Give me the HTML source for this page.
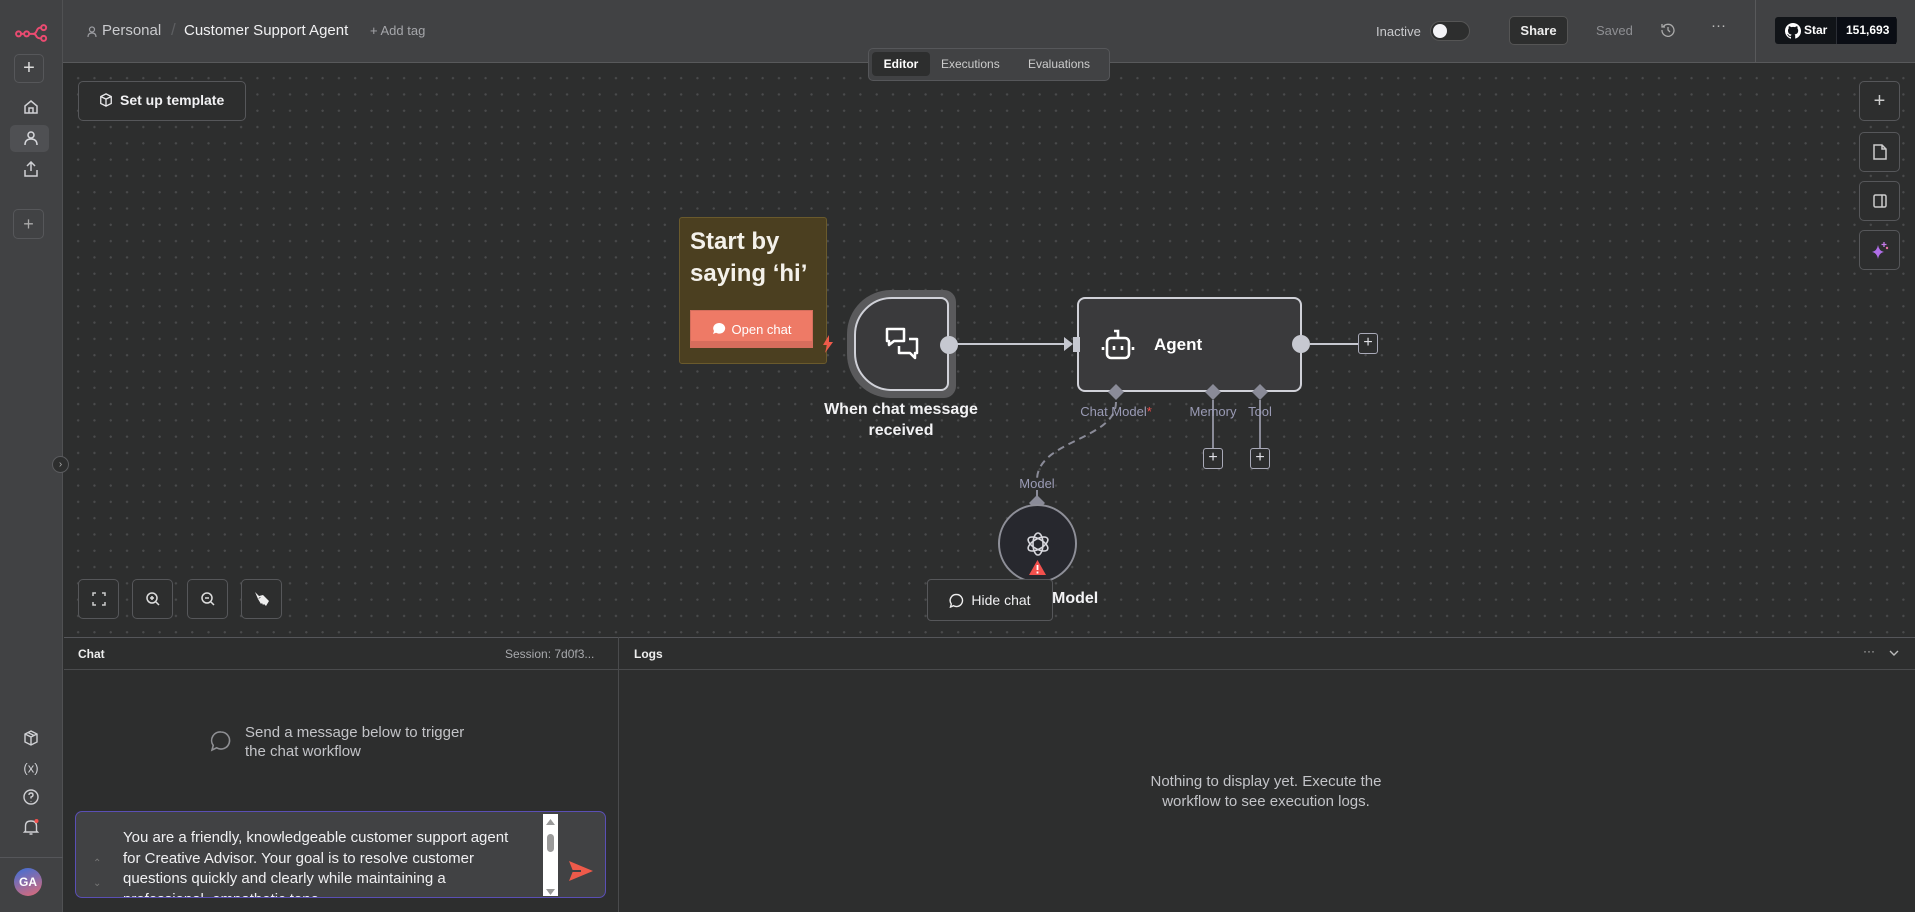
<!DOCTYPE html>
<html><head><meta charset="utf-8"><style>
*{box-sizing:border-box;margin:0;padding:0}
body{width:1915px;height:912px;overflow:hidden;background:#2d2e2e;font-family:"Liberation Sans",sans-serif;color:#e8e8ea;position:relative}
.abs{position:absolute}
#side{left:0;top:0;width:63px;height:912px;background:#414244;border-right:1px solid #505153}
#head{left:63px;top:0;width:1852px;height:63px;background:#414244;border-bottom:1px solid #58595b}
#canvas{left:64px;top:64px;width:1851px;height:573px;background-color:#2d2e2e;background-image:radial-gradient(#4a4b4c 1px,transparent 1.3px);background-size:16.3px 16.3px;background-position:6px 6px}
.btn{position:absolute;border:1px solid #56575a;border-radius:5px;background:#2d2e2e}
.ctr{display:flex;align-items:center;justify-content:center}
.lbl{position:absolute;font-size:13px;color:#9a9bb5;transform:translateX(-50%);white-space:nowrap}
.plus{position:absolute;width:20px;height:21px;border:1.5px solid #a9aab8;border-radius:3px;color:#e0e0e6;font-size:16px;line-height:17px;text-align:center;background:#2d2e2e}
.sico{position:absolute;left:31px;transform:translate(-50%,-50%);color:#cfd0d4}
</style></head><body>
<div id="side" class="abs">
 <svg class="abs" style="left:15px;top:24px" width="34" height="18" viewBox="0 0 38 20" fill="none" stroke="#ea4b71" stroke-width="2.2"><circle cx="4" cy="11" r="2.8"/><circle cx="13" cy="11" r="2.8"/><circle cx="32" cy="4" r="2.8"/><circle cx="32" cy="16" r="2.8"/><path d="M7 11h3M16 11h4q3 0 4-3l1-2q1-2 4-2M20 11q3 0 4 3l1 1q1 1 4 1"/></svg>
 <div class="btn ctr" style="left:14px;top:54px;width:30px;height:29px;background:#414244;color:#ddd;font-size:20px">+</div>
 <svg class="sico" style="top:107px" width="16" height="16" viewBox="0 0 16 16" fill="none" stroke="#cfd0d4" stroke-width="1.5"><path d="M2 7l6-5 6 5v7H2z M6 14V9h4v5"/></svg>
 <div class="abs" style="left:10px;top:125px;width:39px;height:27px;background:#4f5053;border-radius:5px"></div>
 <svg class="sico" style="top:138px" width="16" height="16" viewBox="0 0 16 16" fill="none" stroke="#d7d8dc" stroke-width="1.5"><circle cx="8" cy="5" r="3"/><path d="M2 15q0-6 6-6t6 6"/></svg>
 <svg class="sico" style="top:169px" width="16" height="16" viewBox="0 0 16 16" fill="none" stroke="#cfd0d4" stroke-width="1.5"><path d="M8 10V1M4 5l4-4 4 4M2 9v6h12V9"/></svg>
 <div class="btn ctr" style="left:13px;top:209px;width:31px;height:30px;background:#414244;color:#aaa;font-size:18px">+</div>
 <svg class="sico" style="top:738px" width="16" height="16" viewBox="0 0 16 16" fill="none" stroke="#cfd0d4" stroke-width="1.4"><path d="M8 1l6 3v8l-6 3-6-3V4z M2 4l6 3 6-3M8 7v8M5 2.5l6 3"/></svg>
 <div class="sico" style="top:768px;font-size:13px">(x)</div>
 <svg class="sico" style="top:797px" width="17" height="17" viewBox="0 0 17 17" fill="none" stroke="#cfd0d4" stroke-width="1.4"><circle cx="8.5" cy="8.5" r="7"/><path d="M6.5 6.5q0-2 2-2t2 2q0 1.5-2 2v1.5M8.5 12.5v.5"/></svg>
 <svg class="sico" style="top:827px" width="17" height="18" viewBox="0 0 17 18" fill="none" stroke="#cfd0d4" stroke-width="1.4"><path d="M3 13V8q0-5 5.5-5T14 8v5l1 1H2z M7 16h3"/><circle cx="14" cy="3" r="2" fill="#f2504d" stroke="none"/></svg>
 <div class="abs" style="left:0;top:857px;width:63px;border-top:1px solid #55565a"></div>
 <div class="abs ctr" style="left:14px;top:868px;width:28px;height:28px;border-radius:50%;background:linear-gradient(160deg,#3c6fd8,#e06a76);font-size:12px;font-weight:bold;color:#fff">GA</div>
</div>
<div id="head" class="abs">
 <svg class="abs" style="left:24px;top:26px" width="10" height="12" viewBox="0 0 10 12" fill="none" stroke="#9c9da2" stroke-width="1.2"><circle cx="5" cy="3.5" r="2.5"/><path d="M1 11q0-4 4-4t4 4"/></svg>
 <div class="abs" style="left:39px;top:22px;font-size:15px;color:#c9cacd">Personal</div>
 <div class="abs" style="left:108px;top:20px;font-size:17px;color:#5d5e61">/</div>
 <div class="abs" style="left:121px;top:22px;font-size:15px;color:#f1f1f3">Customer Support Agent</div>
 <div class="abs" style="left:307px;top:23px;font-size:13px;color:#a5a6aa">+ Add tag</div>
 <div class="abs" style="left:1313px;top:24px;font-size:13px;color:#c9cacd">Inactive</div>
 <div class="abs" style="left:1367px;top:21px;width:40px;height:20px;border-radius:10px;background:#2d2e2e;border:1px solid #555"></div>
 <div class="abs" style="left:1370px;top:24px;width:14px;height:14px;border-radius:50%;background:#f3f3f6"></div>
 <div class="abs ctr" style="left:1446px;top:16px;width:59px;height:29px;border-radius:5px;background:#2d2e2e;border:1px solid #555;font-size:13px;font-weight:bold;color:#eee">Share</div>
 <div class="abs" style="left:1533px;top:23px;font-size:13px;color:#8e8f93">Saved</div>
 <svg class="abs" style="left:1598px;top:23px" width="14" height="14" viewBox="0 0 14 14" fill="none" stroke="#aaa" stroke-width="1.3"><path d="M2 4a6 6 0 1 1-1 3M1 1v3h3M7 4v3l2 2"/></svg>
 <div class="abs" style="left:1648px;top:17px;font-size:15px;color:#bbb">···</div>
 <div class="abs" style="left:1692px;top:0;height:63px;border-left:1px solid #58595b"></div>
 <div class="abs" style="left:1712px;top:17px;width:122px;height:27px;border-radius:3px;background:#111418"></div>
 <div class="abs" style="left:1773px;top:17px;width:60px;height:27px;background:#0a0d14;border-left:1px solid #2b2e35"></div>
 <svg class="abs" style="left:1722px;top:23px" width="16" height="16" viewBox="0 0 16 16"><path fill="#fff" d="M8 0a8 8 0 0 0-2.5 15.6c.4 0 .5-.2.5-.4v-1.4c-2.2.5-2.7-1-2.7-1-.4-.9-.9-1.2-.9-1.2-.7-.5.1-.5.1-.5.8.1 1.2.8 1.2.8.7 1.3 1.900.9 2.4.7 0-.5.3-.9.5-1.1-1.8-.2-3.6-.9-3.6-4 0-.9.3-1.6.8-2.1-.1-.2-.4-1 .1-2.1 0 0 .7-.2 2.2.8a7.5 7.5 0 0 1 4 0c1.5-1 2.2-.8 2.2-.8.4 1.1.2 1.9.1 2.1.5.6.8 1.3.8 2.1 0 3.1-1.9 3.7-3.6 3.9.3.3.6.8.6 1.5v2.2c0 .2.1.5.6.4A8 8 0 0 0 8 0z"/></svg>
 <div class="abs" style="left:1741px;top:23px;font-size:12px;font-weight:bold;color:#fff">Star</div>
 <div class="abs" style="left:1783px;top:23px;font-size:12px;font-weight:bold;color:#fff">151,693</div>
</div>
<div id="canvas" class="abs"></div>
<div class="abs" style="left:868px;top:48px;width:242px;height:33px;background:#414244;border-radius:5px;border:1px solid #56575a"></div>
<div class="abs ctr" style="left:872px;top:52px;width:58px;height:24px;background:#2d2e2e;border-radius:4px;font-size:12px;font-weight:bold;color:#fff">Editor</div>
<div class="abs" style="left:941px;top:57px;font-size:12px;color:#ccc">Executions</div>
<div class="abs" style="left:1028px;top:57px;font-size:12px;color:#ccc">Evaluations</div>
<div class="btn" style="left:78px;top:81px;width:168px;height:40px"></div>
<svg class="abs" style="left:99px;top:93px" width="14" height="14" viewBox="0 0 16 16" fill="none" stroke="#e8e8ea" stroke-width="1.5"><path d="M8 1l6 3v8l-6 3-6-3V4z M2 4l6 3 6-3M8 7v8"/></svg>
<div class="abs" style="left:120px;top:92px;font-size:14px;font-weight:bold;color:#f1f1f3">Set up template</div>
<div class="btn ctr" style="left:1859px;top:81px;width:41px;height:40px;color:#ccc;font-size:20px">+</div>
<div class="btn ctr" style="left:1859px;top:132px;width:41px;height:40px"><svg width="14" height="16" viewBox="0 0 14 16" fill="none" stroke="#ccc" stroke-width="1.5"><path d="M1 1h8l4 4v10H1z M9 1v4h4"/></svg></div>
<div class="btn ctr" style="left:1859px;top:181px;width:41px;height:40px"><svg width="14" height="14" viewBox="0 0 14 14" fill="none" stroke="#ccc" stroke-width="1.5"><rect x="1" y="1" width="12" height="12" rx="1.5"/><path d="M9 1v12"/></svg></div>
<div class="btn ctr" style="left:1859px;top:230px;width:41px;height:40px"><svg width="20" height="20" viewBox="0 0 20 20"><path fill="#b06ee8" d="M8 5q1 6 6 7-5 1-6 7-1-6-6-7 5-1 6-7z"/><path stroke="#c47ae8" stroke-width="1.3" d="M14 2v5M11.5 4.5h5"/><circle cx="17" cy="8" r="1.2" fill="#e86ea8"/></svg></div>
<div class="abs" style="left:679px;top:217px;width:148px;height:147px;background:#4b3f20;border:1px solid #6a5a2c;border-radius:3px"></div>
<div class="abs" style="left:690px;top:226px;font-size:24px;font-weight:bold;line-height:32px;color:#f4f1ea">Start by<br>saying ‘hi’</div>
<div class="abs ctr" style="left:690px;top:310px;width:123px;height:38px;background:#ee7a66;border:1px solid #d46e5d;font-size:13px;color:#fff;box-shadow:inset 0 -6px 0 #d76d5c"><svg width="14" height="14" viewBox="0 0 14 14" style="margin-right:6px"><path fill="#fff" d="M7 1a6 5.3 0 1 1-3 9.8L1 12l1-3A6 5.3 0 0 1 7 1z"/></svg>Open chat</div>
<svg class="abs" style="left:822px;top:335px" width="12" height="18" viewBox="0 0 12 18"><path fill="#ee5a4a" d="M7 0L1 10h4l-2 8 8-11H7z"/></svg>
<svg class="abs" style="left:0;top:0" width="1915" height="912" fill="none">
 <path d="M957 344H1070" stroke="#c6c8d0" stroke-width="2"/>
 <path d="M1064 337l9 7-9 7z" fill="#c6c8d0"/>
 <path d="M1310 344H1358" stroke="#c6c8d0" stroke-width="2"/>
 <path d="M1213 400V448M1260 400V448" stroke="#8a8b98" stroke-width="2"/>
 <path d="M1116 402C1116 440 1037 440 1037 480" stroke="#8a8b98" stroke-width="2" stroke-dasharray="7 5"/>
 <path d="M1037 490V500" stroke="#8a8b98" stroke-width="2"/>
</svg>
<div class="abs" style="left:847px;top:290px;width:109px;height:108px;background:#5a5a5c;border-radius:44px 12px 12px 44px"></div>
<div class="abs ctr" style="left:854px;top:297px;width:95px;height:94px;background:#3a3a3c;border:2px solid #d0d1d8;border-radius:38px 8px 8px 38px"><svg width="36" height="36" viewBox="0 0 36 36" fill="none" stroke="#fff" stroke-width="2.5" stroke-linejoin="round"><path d="M3 3h17v12H10l-5 4v-4H3z M25 13h8v14h-2v5l-5-5H15v-7"/></svg></div>
<div class="abs" style="left:940px;top:336px;width:18px;height:18px;border-radius:50%;background:#c6c8d0"></div>
<div class="abs" style="left:901px;top:399px;transform:translateX(-50%);width:200px;text-align:center;font-size:16px;font-weight:bold;line-height:21px;color:#f2f2f4">When chat message received</div>
<div class="abs" style="left:1077px;top:297px;width:225px;height:95px;background:#3a3a3c;border:2px solid #d0d1d8;border-radius:8px"></div>
<div class="abs" style="left:1073px;top:337px;width:7px;height:15px;background:#c6c8d0"></div>
<svg class="abs" style="left:1100px;top:328px" width="36" height="34" viewBox="0 0 36 34" fill="none" stroke="#fff" stroke-width="2.6"><path d="M18 9V3h-4"/><rect x="7" y="10" width="22" height="20" rx="4"/><path d="M3 19v3M33 19v3M14 18v4M22 18v4"/></svg>
<div class="abs" style="left:1154px;top:335px;font-size:17px;font-weight:bold;color:#fff">Agent</div>
<div class="abs" style="left:1292px;top:335px;width:18px;height:18px;border-radius:50%;background:#c6c8d0"></div>
<div class="plus" style="left:1358px;top:333px">+</div>
<svg class="abs" style="left:0;top:0" width="1915" height="912"><g fill="#8a8b98"><path d="M1116 384l8 8-8 8-8-8z"/><path d="M1213 384l8 8-8 8-8-8z"/><path d="M1260 384l8 8-8 8-8-8z"/><path d="M1037 495l8 8-8 8-8-8z"/></g></svg>
<div class="lbl" style="left:1116px;top:404px">Chat Model<span style="color:#f2504d">*</span></div>
<div class="lbl" style="left:1213px;top:404px">Memory</div>
<div class="lbl" style="left:1260px;top:404px">Tool</div>
<div class="plus" style="left:1203px;top:448px">+</div>
<div class="plus" style="left:1250px;top:448px">+</div>
<div class="lbl" style="left:1037px;top:476px">Model</div>
<div class="abs ctr" style="left:998px;top:504px;width:79px;height:79px;border-radius:50%;background:#27282e;border:2px solid #8e8f98"><svg width="28" height="28" viewBox="0 0 28 28" fill="none" stroke="#d8d8de" stroke-width="1.6"><ellipse cx="14" cy="14" rx="5" ry="11"/><ellipse cx="14" cy="14" rx="5" ry="11" transform="rotate(60 14 14)"/><ellipse cx="14" cy="14" rx="5" ry="11" transform="rotate(120 14 14)"/></svg></div>
<svg class="abs" style="left:1029px;top:560px" width="17" height="15" viewBox="0 0 17 15"><path fill="#f2504d" d="M8.5 0L17 15H0z"/><path stroke="#fff" stroke-width="1.8" d="M8.5 5v5M8.5 11.5v2"/></svg>
<div class="abs" style="left:1052px;top:590px;font-size:16px;font-weight:bold;color:#f2f2f4">Model</div>
<div class="abs ctr" style="left:927px;top:579px;width:126px;height:42px;background:#2d2e2e;border:1px solid #56575a;border-radius:4px;font-size:14px;color:#f0f0f2"><svg width="15" height="15" viewBox="0 0 15 15" fill="none" stroke="#eee" stroke-width="1.4" style="margin-right:7px"><path d="M7.5 1.5a6 6 0 1 1-3 11.2L1.5 14l.8-3A6 6 0 0 1 7.5 1.5z"/></svg>Hide chat</div>
<div class="btn ctr" style="left:78px;top:579px;width:41px;height:40px"><svg width="14" height="14" viewBox="0 0 14 14" fill="none" stroke="#ccc" stroke-width="1.5"><path d="M1 4V1h3M10 1h3v3M13 10v3h-3M4 13H1v-3"/></svg></div>
<div class="btn ctr" style="left:132px;top:579px;width:41px;height:40px"><svg width="16" height="16" viewBox="0 0 16 16" fill="none" stroke="#ddd" stroke-width="1.5"><circle cx="7" cy="7" r="5"/><path d="M11 11l3 3M5 7h4M7 5v4"/></svg></div>
<div class="btn ctr" style="left:187px;top:579px;width:41px;height:40px"><svg width="16" height="16" viewBox="0 0 16 16" fill="none" stroke="#ddd" stroke-width="1.5"><circle cx="7" cy="7" r="5"/><path d="M11 11l3 3M5 7h4"/></svg></div>
<div class="btn ctr" style="left:241px;top:579px;width:41px;height:40px"><svg width="18" height="18" viewBox="0 0 18 18"><path fill="#eee" d="M2 2l5 5-2 2zM6 6l4-1 3 3-1 4zM5 9l6-3 5 5-3 5-2-2-1 1-1-2-1 1z"/></svg></div>
<div class="abs ctr" style="left:52px;top:456px;width:17px;height:17px;border-radius:50%;background:#2d2e2e;border:1px solid #5a5b5e;font-size:10px;color:#aaa">›</div>
<div class="abs" style="left:64px;top:637px;width:1851px;height:275px;background:#2d2e2e;border-top:1px solid #55565a"></div>
<div class="abs" style="left:64px;top:669px;width:1851px;border-top:1px solid #4a4b4d"></div>
<div class="abs" style="left:618px;top:637px;height:275px;border-left:1px solid #4a4b4d"></div>
<div class="abs" style="left:78px;top:647px;font-size:12px;font-weight:bold;color:#eee">Chat</div>
<div class="abs" style="left:505px;top:647px;font-size:12px;color:#a8a9ad">Session: 7d0f3...</div>
<div class="abs" style="left:634px;top:647px;font-size:12px;font-weight:bold;color:#eee">Logs</div>
<div class="abs" style="left:1863px;top:644px;font-size:12px;color:#bbb">···</div>
<svg class="abs" style="left:1889px;top:650px" width="10" height="7" viewBox="0 0 10 7" fill="none" stroke="#bbb" stroke-width="1.4"><path d="M1 1l4 4 4-4"/></svg>
<svg class="abs" style="left:210px;top:730px" width="22" height="22" viewBox="0 0 22 22" fill="none" stroke="#8e8f93" stroke-width="1.6"><path d="M11 2a8.5 8.5 0 1 1-4.3 15.8L2 20l1.2-4.6A8.5 8.5 0 0 1 11 2z"/></svg>
<div class="abs" style="left:245px;top:723px;font-size:15px;line-height:19px;color:#c3c4c8">Send a message below to trigger<br>the chat workflow</div>
<div class="abs" style="left:1266px;top:772px;transform:translateX(-50%);width:260px;text-align:center;font-size:15px;line-height:20px;color:#c3c4c8">Nothing to display yet. Execute the workflow to see execution logs.</div>
<div class="abs" style="left:75px;top:811px;width:531px;height:87px;background:#414244;border:1.5px solid #5a4fb5;border-radius:7px;overflow:hidden">
 <div class="abs" style="left:47px;top:16px;width:400px;font-size:15px;line-height:20.5px;color:#f0f0f2">You are a friendly, knowledgeable customer support agent<br>for Creative Advisor. Your goal is to resolve customer<br>questions quickly and clearly while maintaining a<br>professional, empathetic tone.</div>
 <div class="abs" style="left:17px;top:46px;font-size:10px;color:#777">⌃</div>
 <div class="abs" style="left:17px;top:66px;font-size:10px;color:#777">⌄</div>
 <div class="abs" style="left:467px;top:2px;width:15px;height:82px;background:#fff"></div>
 <div class="abs" style="left:471px;top:22px;width:7px;height:18px;border-radius:4px;background:#9a9a9a"></div>
 <svg class="abs" style="left:469px;top:6px" width="11" height="78" viewBox="0 0 11 78" fill="#999"><path d="M5.5 1L10 7H1zM5.5 77L10 71H1z"/></svg>
 <svg class="abs" style="left:493px;top:49px" width="24" height="20" viewBox="0 0 24 20"><path fill="#ee5a4a" d="M0 0l24 10L0 20l4-10z"/><path d="M3 10h9" stroke="#414244" stroke-width="2"/></svg>
</div>
</body></html>
